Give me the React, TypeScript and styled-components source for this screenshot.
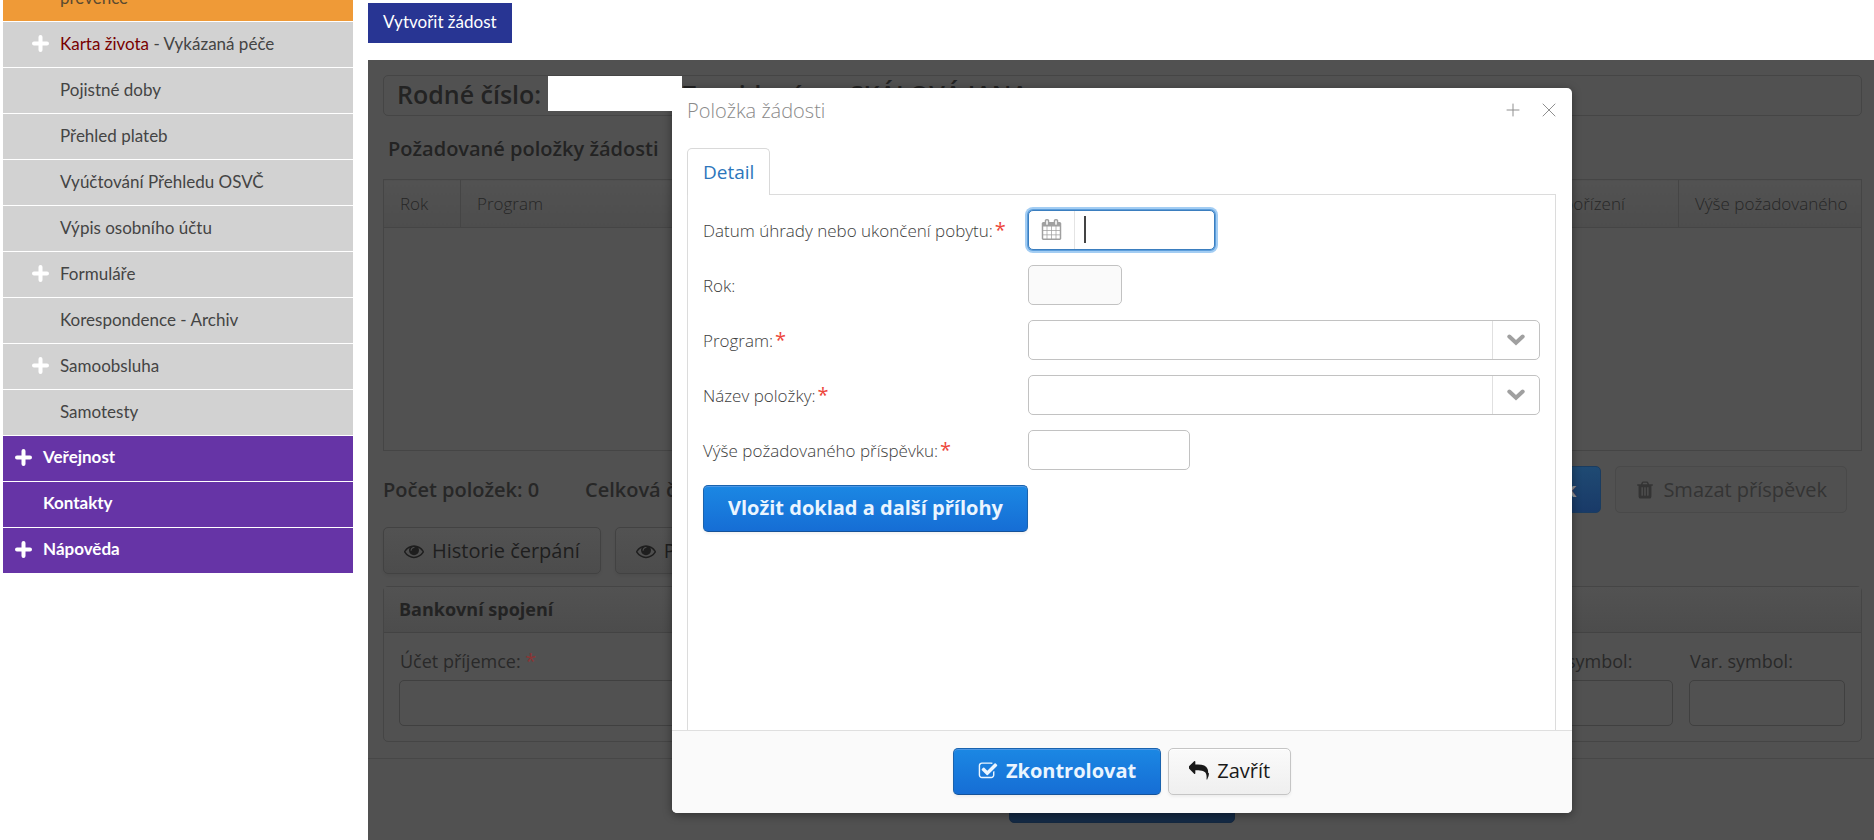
import React from 'react';
import styled, { createGlobalStyle, css } from 'styled-components';

const GlobalStyle = createGlobalStyle`
  *, *::before, *::after { box-sizing: border-box; }
  body { margin: 0; background: #fff; font-family: 'Open Sans', sans-serif; font-size: 18px; line-height: 24px; }
  button, input, select { font: inherit; margin: 0; }
`;

/* ---------- icons ---------- */

const paths = {
  calendar:
    'M192 1664h288v-288h-288v288zm352 0h320v-288h-320v288zm-352-352h288v-320h-288v320zm352 0h320v-320h-320v320zm-352-384h288v-288h-288v288zm736 736h320v-288h-320v288zm-384-736h320v-288h-320v288zm768 736h288v-288h-288v288zm-384-352h320v-320h-320v320zm-352-864v-288q0-13-9.5-22.5t-22.5-9.5h-64q-13 0-22.5 9.5t-9.5 22.5v288q0 13 9.5 22.5t22.5 9.5h64q13 0 22.5-9.5t9.5-22.5zm736 864h288v-320h-288v320zm-384-384h320v-288h-320v288zm384 0h288v-288h-288v288zm32-480v-288q0-13-9.5-22.5t-22.5-9.5h-64q-13 0-22.5 9.5t-9.5 22.5v288q0 13 9.5 22.5t22.5 9.5h64q13 0 22.5-9.5t9.5-22.5zm384-64v1280q0 52-38 90t-90 38h-1408q-52 0-90-38t-38-90v-1280q0-52 38-90t90-38h128v-96q0-66 47-113t113-47h64q66 0 113 47t47 113v96h384v-96q0-66 47-113t113-47h64q66 0 113 47t47 113v96h128q52 0 90 38t38 90z',
  eye: 'M1664 960q-152-236-381-353 61 104 61 225 0 185-131.5 316.5t-316.5 131.5-316.5-131.5-131.5-316.5q0-121 61-225-229 117-381 353 133 205 333.5 326.5t434.5 121.5 434.5-121.5 333.5-326.5zm-720-384q0-20-14-34t-34-14q-125 0-214.5 89.5t-89.5 214.5q0 20 14 34t34 14 34-14 14-34q0-86 61-147t147-61q20 0 34-14t14-34zm848 384q0 34-20 69-140 230-376.5 368.5t-499.5 138.5-499.5-139-376.5-368q-20-35-20-69t20-69q140-229 376.5-368t499.5-139 499.5 139 376.5 368q20 35 20 69z',
  check:
    'M1472 930v318q0 119-84.5 203.5t-203.5 84.5h-832q-119 0-203.5-84.5t-84.5-203.5v-832q0-119 84.5-203.5t203.5-84.5h832q63 0 117 25 15 7 18 23 3 17-9 29l-49 49q-10 10-23 10-3 0-9-2-23-6-45-6h-832q-66 0-113 47t-47 113v832q0 66 47 113t113 47h832q66 0 113-47t47-113v-254q0-13 9-22l64-64q10-10 23-10 6 0 12 3 20 8 20 29zm231-489l-814 814q-24 24-57 24t-57-24l-430-430q-24-24-24-57t24-57l110-110q24-24 57-24t57 24l263 263 647-647q24-24 57-24t57 24l110 110q24 24 24 57t-24 57z',
  reply:
    'M1792 1120q0 166-127 451-3 7-10.5 24t-13.5 30-13 22q-12 17-28 17-15 0-23.5-10t-8.5-25q0-9 2.5-26.5t2.5-23.5q5-68 5-123 0-112-19.5-200.5t-54-153.5-89.5-112-116.5-80-146.5-47-168-22.5-192.5-6.5h-224v256q0 26-19 45t-45 19-45-19l-512-512q-19-19-19-45t19-45l512-512q19-19 45-19t45 19 19 45v256h224q713 0 875 403 53 134 53 333z',
  trash:
    'M704 1376v-704q0-14-9-23t-23-9h-64q-14 0-23 9t-9 23v704q0 14 9 23t23 9h64q14 0 23-9t9-23zm256 0v-704q0-14-9-23t-23-9h-64q-14 0-23 9t-9 23v704q0 14 9 23t23 9h64q14 0 23-9t9-23zm256 0v-704q0-14-9-23t-23-9h-64q-14 0-23 9t-9 23v704q0 14 9 23t23 9h64q14 0 23-9t9-23zm-544-992h448l-48-117q-7-9-17-11h-317q-10 2-17 11zm928 32v64q0 14-9 23t-23 9h-96v948q0 83-47 143.5t-113 60.5h-832q-66 0-113-58.5t-47-141.5v-952h-96q-14 0-23-9t-9-23v-64q0-14 9-23t23-9h309l70-167q15-37 54-63t79-26h320q40 0 79 26t54 63l70 167h309q14 0 23 9t9 23z',
};

const Svg = styled.svg`
  flex: none;
  display: block;
`;

function Icon({ name, size = 20 }: { name: keyof typeof paths; size?: number }) {
  return (
    <Svg width={size} height={size} viewBox="0 0 1792 1792" fill="currentColor" aria-hidden="true">
      <path d={paths[name]} />
    </Svg>
  );
}

const Stroke = ({ d, size, width }: { d: string; size: number; width: number }) => (
  <Svg width={size} height={size} viewBox={`0 0 ${size} ${size}`} fill="none" stroke="currentColor" strokeWidth={width} strokeLinecap="round" aria-hidden="true">
    <path d={d} />
  </Svg>
);

/* ---------- page frame and side menu ---------- */

const Page = styled.div`
  display: flex;
  min-height: 100vh;
`;

const Sidebar = styled.nav`
  flex: 0 0 350px;
  margin: 0 15px 0 3px;
  display: flex;
  flex-direction: column;
  gap: 1px;
  font: 17px/20px Lato, sans-serif;
`;

const tones = {
  active: css`
    height: 21px;
    align-items: flex-end;
    padding: 0 0 13px 29px;
    overflow: hidden;
    background: #ef9a37;
    color: #5b4a30;
  `,
  sub: css`
    height: 45px;
    padding: 0 0 2px 29px;
    background: #d2d2d2;
    color: #444;
  `,
  top: css`
    height: 45px;
    padding: 0 0 3px 12px;
    background: #6634a6;
    color: #fff;
    font-weight: 700;
  `,
};

const MenuLink = styled.a<{ $tone: keyof typeof tones }>`
  display: flex;
  align-items: center;
  text-decoration: none;
  ${(p) => tones[p.$tone]}
`;

const Marker = styled.span`
  width: 28px;
  flex: none;
  color: #fff;
`;

const Accent = styled.span`
  color: #780000;
`;

const Main = styled.main`
  flex: 1;
  min-width: 0;
  display: flex;
  flex-direction: column;
`;

const TopBar = styled.div`
  padding: 3px 0 17px;
`;

const CreateButton = styled.button`
  height: 40px;
  padding: 0 15px 2px;
  border: 0;
  background: #283593;
  color: #fff;
  font: 17px/20px Lato, sans-serif;
`;

const Frame = styled.div`
  position: relative;
  flex: 1;
  background: #515151;
  color: #232323;
`;

/* ---------- dimmed request form ---------- */

const Request = styled.section`
  padding: 15px 12px 16px 15px;
  border-bottom: 1px solid #474747;
`;

const Insured = styled.div`
  display: flex;
  height: 41px;
  padding: 0 13px;
  border: 1px solid #454545;
  border-radius: 5px;
  font-size: 25px;
  font-weight: 600;
  line-height: 37px;
  white-space: nowrap;
`;

const Blank = styled.span`
  position: relative;
  z-index: 2;
  flex: none;
  width: 134px;
  height: 35px;
  margin-left: 7px;
  background: #fff;
`;

const PersonName = styled.span`
  margin-left: 8px;
`;

const Heading = styled.h2`
  margin: 0;
  padding: 21px 5px 18px;
  font-size: 20px;
  font-weight: 600;
  line-height: 24px;
`;

const Items = styled.table`
  width: 100%;
  height: 272px;
  table-layout: fixed;
  border-collapse: collapse;
  border: 1px solid #454545;
  color: #262626;
`;

const HeadCell = styled.th<{ $width?: number }>`
  width: ${(p) => (p.$width ? `${p.$width}px` : 'auto')};
  height: 48px;
  padding: 0 0 0 16px;
  border: 1px solid #454545;
  background: linear-gradient(#525252, #4d4d4d);
  font-size: 17px;
  font-weight: 300;
  text-align: left;
  white-space: nowrap;
  overflow: hidden;
`;

const Bar = styled.div<{ $top: number; $right?: number }>`
  display: flex;
  align-items: center;
  gap: 14px;
  padding: ${(p) => p.$top}px ${(p) => p.$right ?? 0}px 0 0;
`;

const Total = styled.span<{ $width: number }>`
  width: ${(p) => p.$width}px;
  flex: none;
  font-size: 20px;
  font-weight: 600;
  color: #272727;
`;

const Spacer = styled.span`
  flex: 1;
`;

const looks = {
  primary: css`
    border-color: #1a63ae #1a63ae #155299;
    background: linear-gradient(#1b87e3 2%, #166ed5 98%);
    box-shadow: inset 0 1px 0 #4d98e6, 0 2px 3px rgba(0, 0, 0, 0.05);
    color: #eaf5ff;
    font-weight: 700;
  `,
  plain: css`
    border-color: #c5c5c5;
    background: linear-gradient(#fafafa 2%, #efefef 98%);
    box-shadow: inset 0 1px 0 #fff, 0 2px 3px rgba(0, 0, 0, 0.05);
    color: #191919;
  `,
  dimmed: css`
    border-color: #424242;
    background: linear-gradient(#525252 2%, #4c4c4c 98%);
    box-shadow: 0 2px 3px rgba(0, 0, 0, 0.05);
    color: #1e1e1e;
  `,
  disabled: css`
    border-color: #494949;
    background: #505050;
    color: #343434;
  `,
  dimmedPrimary: css`
    border-color: #1a3c60;
    background: linear-gradient(#1f4a73, #193a68);
    color: #8f9499;
    font-weight: 700;
  `,
  shadedPrimary: css`
    border-color: #142840;
    background: #142a45;
    color: #8f9499;
    font-weight: 700;
  `,
};

const Button = styled.button<{ $look: keyof typeof looks; $pad?: number }>`
  display: inline-flex;
  align-items: center;
  gap: 8px;
  height: 47px;
  flex: none;
  padding: 0 ${(p) => p.$pad ?? 20}px;
  border: 1px solid;
  border-radius: 5px;
  font-size: 20px;
  white-space: nowrap;
  ${(p) => looks[p.$look]}
`;

const Bank = styled.section`
  margin-top: 12px;
  border: 1px solid #454545;
  border-radius: 5px;
`;

const BankTitle = styled.h3`
  margin: 0;
  padding: 10px 15px 11px;
  border-bottom: 1px solid #434343;
  background: linear-gradient(#525252, #4c4c4c);
  font-size: 18px;
  font-weight: 700;
  line-height: 24px;
`;

const BankFields = styled.div`
  display: flex;
  gap: 16px;
  padding: 16px 16px 15px 15px;
`;

const BankField = styled.label<{ $grow?: boolean }>`
  flex: ${(p) => (p.$grow ? '1' : '0 0 156px')};
  color: #292929;
  white-space: nowrap;
`;

const LabelText = styled.span`
  display: block;
  padding: 0 1px 7px;
`;

const Star = styled.span<{ $dim?: boolean }>`
  margin-left: ${(p) => (p.$dim ? 0 : 2)}px;
  color: ${(p) => (p.$dim ? '#8a3535' : '#ed473b')};
  font-size: 20px;
  font-weight: 400;
  line-height: 20px;
`;

const DimInput = styled.input`
  display: block;
  width: 100%;
  height: 46px;
  border: 1px solid #404040;
  border-radius: 5px;
  background: #515151;
`;

const SubmitRow = styled.div`
  display: flex;
  justify-content: center;
  padding: 17px 0 0 2px;
`;

/* ---------- dialog ---------- */

const Backdrop = styled.div`
  position: absolute;
  inset: 0;
  z-index: 1;
  display: flex;
  align-items: center;
  justify-content: center;
  padding-left: 2px;
`;

const Dialog = styled.div`
  display: flex;
  flex-direction: column;
  width: 900px;
  min-height: 725px;
  border-radius: 5px;
  background: #fff;
  box-shadow: 0 2px 10px rgba(0, 0, 0, 0.4);
  overflow: hidden;
`;

const DialogHeader = styled.header`
  display: flex;
  align-items: center;
  height: 45px;
  padding: 0 11px 0 15px;
  color: #8a8a8a;
`;

const DialogTitle = styled.h1`
  flex: 1;
  margin: 0;
  padding-top: 1px;
  font-size: 20px;
  font-weight: 300;
  line-height: 24px;
`;

const WindowButton = styled.button`
  display: flex;
  width: 24px;
  height: 24px;
  margin-left: 12px;
  padding: 0;
  align-items: center;
  justify-content: center;
  border: 0;
  background: none;
  color: #8f8f8f;
`;

const DialogBody = styled.div`
  flex: 1;
  display: flex;
  flex-direction: column;
  padding: 15px 16px 0 15px;
`;

const Tabs = styled.div`
  display: flex;
  height: 47px;
`;

const Tab = styled.button`
  padding: 1px 15px 0;
  border: 1px solid #d9d9d9;
  border-bottom: 0;
  border-radius: 5px 5px 0 0;
  background: #fff;
  color: #2d76bb;
  font-size: 19px;
`;

const TabRule = styled.span`
  flex: 1;
  border-bottom: 1px solid #dcdcdc;
`;

const Panel = styled.form`
  flex: 1;
  display: flex;
  flex-direction: column;
  align-items: flex-start;
  gap: 15px;
  padding: 15px;
  border: solid #dcdcdc;
  border-width: 0 1px;
`;

const Row = styled.div`
  display: flex;
  width: 100%;
  align-items: center;
`;

const FieldLabel = styled.label`
  width: 325px;
  flex: none;
  padding-top: 2px;
  color: #3d3d3d;
  font-size: 17px;
  font-weight: 300;
  white-space: nowrap;
`;

const box = css`
  height: 40px;
  border: 1px solid #c2c2c2;
  border-radius: 5px;
  background: #fff;
`;

const TextInput = styled.input<{ $width: number }>`
  ${box}
  width: ${(p) => p.$width}px;
  padding: 0 8px;
  &:read-only { background: #fafafa; }
`;

const DateBox = styled.div`
  ${box}
  display: flex;
  align-items: center;
  width: 187px;
  border-color: #3b7ebf;
  box-shadow: 0 0 0 1px #5e9fdc, 0 0 0 3px #a3cdf3;
`;

const DateButton = styled.button`
  display: flex;
  align-items: center;
  justify-content: center;
  width: 46px;
  height: 100%;
  padding: 0;
  border: 0;
  border-right: 1px solid #e4e4e4;
  background: none;
  color: #a0a0a0;
`;

const Caret = styled.span`
  width: 2px;
  height: 27px;
  margin-left: 9px;
  background: #444;
`;

const DateInput = styled.input`
  flex: 1;
  min-width: 0;
  height: 100%;
  border: 0;
  outline: 0;
  background: none;
`;

const SelectBox = styled.div`
  ${box}
  position: relative;
  flex: 1;
  display: flex;
  color: #a0a0a0;
`;

const Select = styled.select`
  flex: 1;
  padding: 0 58px 0 10px;
  border: 0;
  border-radius: 5px;
  outline: 0;
  appearance: none;
  background: transparent;
`;

const SelectArrow = styled.span`
  position: absolute;
  inset: 0 0 0 auto;
  width: 47px;
  display: flex;
  align-items: center;
  justify-content: center;
  border-left: 1px solid #e0e0e0;
  pointer-events: none;
`;

const DialogFooter = styled.footer`
  display: flex;
  justify-content: center;
  gap: 7px;
  padding: 17px 0 18px;
  border-top: 1px solid #dfdfdf;
  background: #fafafa;
`;

type Item = { label: string; accent?: string; plus?: boolean; tone: keyof typeof tones };

const menu: Item[] = [
  { label: 'prevence', tone: 'active' },
  { accent: 'Karta života', label: ' - Vykázaná péče', plus: true, tone: 'sub' },
  { label: 'Pojistné doby', tone: 'sub' },
  { label: 'Přehled plateb', tone: 'sub' },
  { label: 'Vyúčtování Přehledu OSVČ', tone: 'sub' },
  { label: 'Výpis osobního účtu', tone: 'sub' },
  { label: 'Formuláře', plus: true, tone: 'sub' },
  { label: 'Korespondence - Archiv', tone: 'sub' },
  { label: 'Samoobsluha', plus: true, tone: 'sub' },
  { label: 'Samotesty', tone: 'sub' },
  { label: 'Veřejnost', plus: true, tone: 'top' },
  { label: 'Kontakty', tone: 'top' },
  { label: 'Nápověda', plus: true, tone: 'top' },
];

function Combo({ id, label }: { id: string; label: string }) {
  return (
    <Row>
      <FieldLabel htmlFor={id}>
        {label}
        <Star>*</Star>
      </FieldLabel>
      <SelectBox>
        <Select id={id} defaultValue="">
          <option value="" />
        </Select>
        <SelectArrow>
          <Svg width="18" height="12" viewBox="0 0 18 12" fill="none" stroke="currentColor" strokeWidth="4" strokeLinecap="round" aria-hidden="true">
            <path d="M2.300 2.500L9 8.800L15.700 2.500" />
          </Svg>
        </SelectArrow>
      </SelectBox>
    </Row>
  );
}

export default function App() {
  return (
    <Page>
      <GlobalStyle />
      <Sidebar>
        {menu.map((m) => (
          <MenuLink key={m.label} href="#" $tone={m.tone}>
            <Marker>{m.plus && <Stroke size={17} width={4} d="M8.500 2V15M2 8.500H15" />}</Marker>
            <span>
              {m.accent && <Accent>{m.accent}</Accent>}
              {m.label}
            </span>
          </MenuLink>
        ))}
      </Sidebar>
      <Main>
        <TopBar>
          <CreateButton>Vytvořit žádost</CreateButton>
        </TopBar>
        <Frame>
          <Request>
            <Insured>
              <span>Rodné číslo:</span>
              <Blank />
              <span>Zaevidována:</span>
              <PersonName>SKÁLOVÁ JANA</PersonName>
            </Insured>
            <Heading>Požadované položky žádosti</Heading>
            <Items>
              <thead>
                <tr>
                  <HeadCell $width={77}>Rok</HeadCell>
                  <HeadCell>Program</HeadCell>
                  <HeadCell>Název položky</HeadCell>
                  <HeadCell $width={188}>Datum pořízení</HeadCell>
                  <HeadCell $width={183}>Výše požadovaného</HeadCell>
                </tr>
              </thead>
              <tbody>
                <tr>
                  <td colSpan={5} />
                </tr>
              </tbody>
            </Items>
            <Bar $top={15} $right={15}>
              <Total $width={188}>Počet položek: 0</Total>
              <Total $width={160}>Celková částka:</Total>
              <Spacer />
              <Button $look="dimmedPrimary" $pad={24}>Přidat příspěvek</Button>
              <Button $look="disabled" $pad={19} disabled>
                <Icon name="trash" />
                Smazat příspěvek
              </Button>
            </Bar>
            <Bar $top={14}>
              <Button $look="dimmed">
                <Icon name="eye" />
                Historie čerpání
              </Button>
              <Button $look="dimmed">
                <Icon name="eye" />
                Přehled programů
              </Button>
            </Bar>
            <Bank>
              <BankTitle>Bankovní spojení</BankTitle>
              <BankFields>
                <BankField $grow>
                  <LabelText>
                    Účet příjemce: <Star $dim>*</Star>
                  </LabelText>
                  <DimInput />
                </BankField>
                <BankField>
                  <LabelText>Spec. symbol:</LabelText>
                  <DimInput />
                </BankField>
                <BankField>
                  <LabelText>Var. symbol:</LabelText>
                  <DimInput />
                </BankField>
              </BankFields>
            </Bank>
          </Request>
          <SubmitRow>
            <Button $look="shadedPrimary" $pad={38}>Odeslat žádost</Button>
          </SubmitRow>

          <Backdrop>
            <Dialog role="dialog" aria-labelledby="dialog-title">
              <DialogHeader>
                <DialogTitle id="dialog-title">Položka žádosti</DialogTitle>
                <WindowButton aria-label="Maximalizovat">
                  <Stroke size={14} width={1} d="M7 1V13M1 7H13" />
                </WindowButton>
                <WindowButton aria-label="Zavřít okno">
                  <Stroke size={14} width={1} d="M1 1L13 13M13 1L1 13" />
                </WindowButton>
              </DialogHeader>
              <DialogBody>
                <Tabs role="tablist">
                  <Tab role="tab" aria-selected="true">Detail</Tab>
                  <TabRule />
                </Tabs>
                <Panel>
                  <Row>
                    <FieldLabel htmlFor="paid">
                      Datum úhrady nebo ukončení pobytu:
                      <Star>*</Star>
                    </FieldLabel>
                    <DateBox>
                      <DateButton type="button" aria-label="Kalendář">
                        <Icon name="calendar" size={21} />
                      </DateButton>
                      <Caret />
                      <DateInput id="paid" />
                    </DateBox>
                  </Row>
                  <Row>
                    <FieldLabel htmlFor="year">Rok:</FieldLabel>
                    <TextInput id="year" $width={94} readOnly />
                  </Row>
                  <Combo id="program" label="Program:" />
                  <Combo id="item" label="Název položky:" />
                  <Row>
                    <FieldLabel htmlFor="amount">
                      Výše požadovaného příspěvku:
                      <Star>*</Star>
                    </FieldLabel>
                    <TextInput id="amount" $width={162} />
                  </Row>
                  <Button type="button" $look="primary" $pad={24}>Vložit doklad a další přílohy</Button>
                </Panel>
              </DialogBody>
              <DialogFooter>
                <Button $look="primary" $pad={24}>
                  <Icon name="check" />
                  Zkontrolovat
                </Button>
                <Button $look="plain">
                  <Icon name="reply" />
                  Zavřít
                </Button>
              </DialogFooter>
            </Dialog>
          </Backdrop>
        </Frame>
      </Main>
    </Page>
  );
}
